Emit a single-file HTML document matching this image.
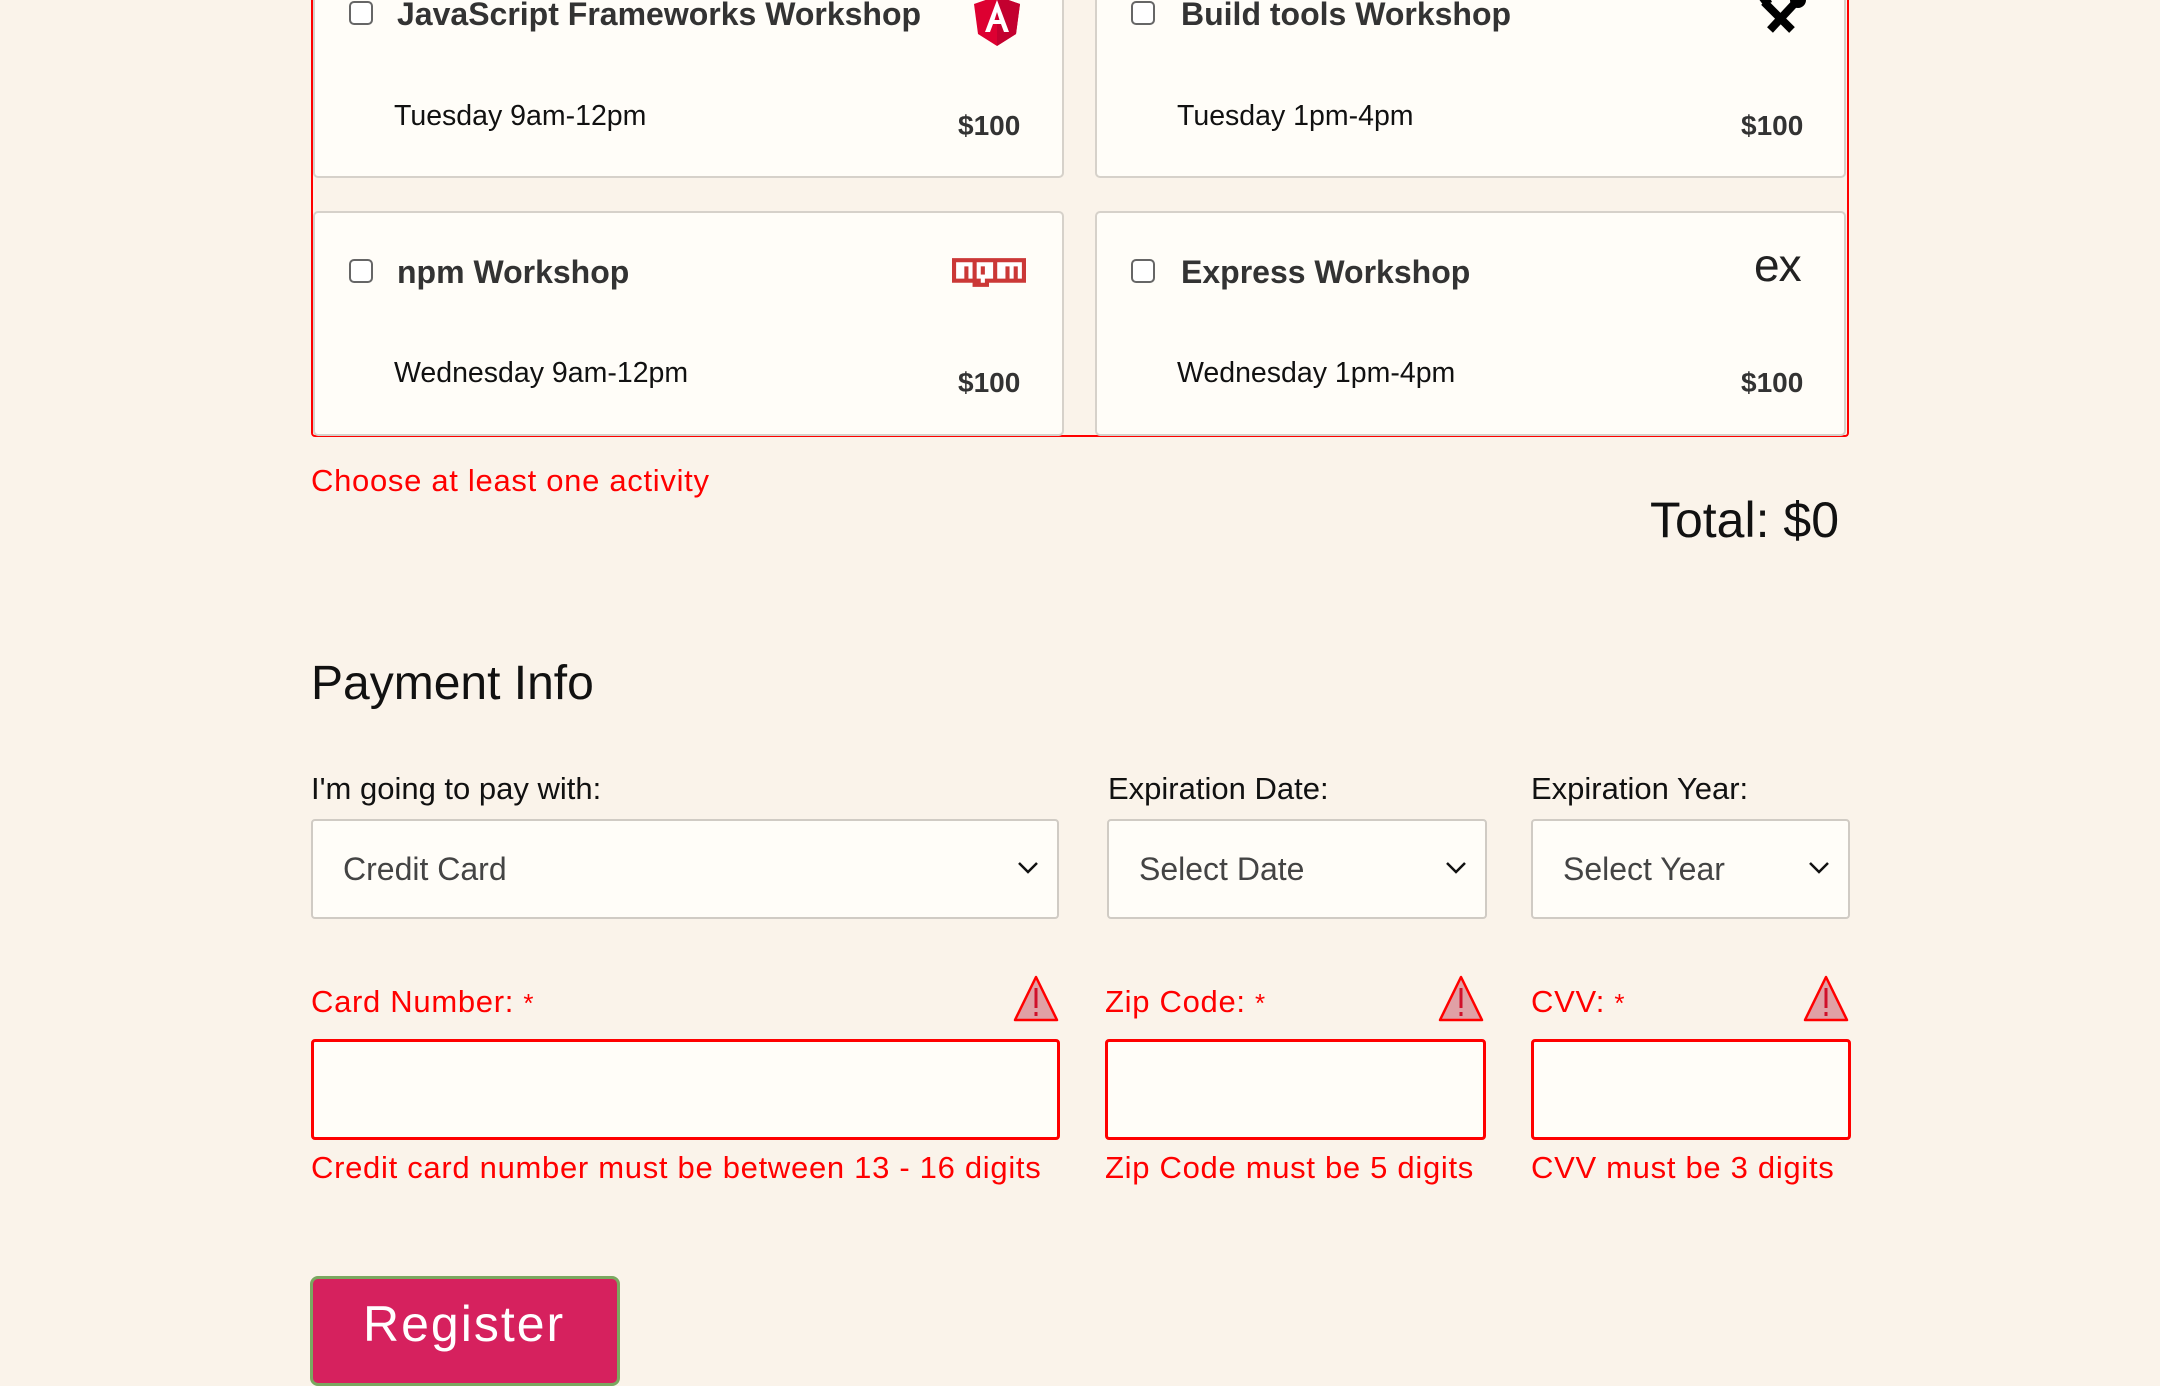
<!DOCTYPE html>
<html><head><meta charset="utf-8"><style>
*{box-sizing:border-box;margin:0;padding:0}
body{width:2160px;height:1372px;background:#faf3ea;position:relative;overflow:hidden;font-family:"Liberation Sans",sans-serif;}
.a{position:absolute;white-space:nowrap}
.fs{position:absolute;left:311px;top:-20px;width:1538px;height:457px;border:2px solid #f00;border-top:none;border-radius:0 0 4px 4px}
.card{position:absolute;background:#fffdf8;border:2px solid #d6d1ca;border-radius:5px}
.cb{position:absolute;width:24px;height:24px;border:2px solid #666;border-radius:5px;background:#fff}
.t{font-weight:bold;font-size:32px;color:#333}
.tm{font-size:28.5px;color:#111}
.pr{font-weight:bold;font-size:28px;color:#333}
.sel{position:absolute;top:819px;height:100px;background:#fffdf8;border:2px solid #d0cbc4;border-radius:4px;font-size:32px;color:#444;padding-left:30px;line-height:96px}
.sel svg{position:absolute;right:18px;top:40px}
.lab{font-size:31px;color:#111}
.err{font-size:31px;color:#f00;letter-spacing:0.7px}
.inp{position:absolute;top:1039px;height:101px;background:#fffdf8;border:3px solid #f00;border-radius:4px}
</style></head><body>
<div class="fs"></div>
<div class="card" style="left:313px;top:-20px;width:751px;height:198px"></div>
<div class="card" style="left:1095px;top:-20px;width:751px;height:198px"></div>
<div class="card" style="left:313px;top:211px;width:751px;height:225px"></div>
<div class="card" style="left:1095px;top:211px;width:751px;height:225px"></div>

<div class="cb" style="left:349px;top:1px"></div>
<div class="a t" style="left:397px;top:-4px">JavaScript Frameworks Workshop</div>
<div class="a tm" style="left:394px;top:100px">Tuesday 9am-12pm</div>
<div class="a pr" style="left:958px;top:110px">$100</div>
<svg class="a" style="left:972px;top:-4px" width="50" height="50" viewBox="0 0 50 50"><path d="M25 0 L48 8 L44 38 L25 50 L6 38 L2 8 Z" fill="#dd0031"/><path d="M25 0 L48 8 L44 38 L25 50Z" fill="#c3002f"/><path d="M25 4 L13 36 H18 L21 28 H29 L32 36 H37 Z M22.5 24 L25 16 L27.5 24Z" fill="#fff"/></svg>

<div class="cb" style="left:1131px;top:1px"></div>
<div class="a t" style="left:1181px;top:-4px">Build tools Workshop</div>
<div class="a tm" style="left:1177px;top:100px">Tuesday 1pm-4pm</div>
<div class="a pr" style="left:1741px;top:110px">$100</div>
<svg class="a" style="left:1756px;top:-6px" width="50" height="40" viewBox="0 0 50 40"><path d="M8 8 L36 36" stroke="#000" stroke-width="8"/><path d="M40 8 L14 36" stroke="#000" stroke-width="8"/><path d="M2 4 L12 0 L16 8 L8 12Z" fill="#000"/><circle cx="42" cy="6" r="8" fill="#000"/><circle cx="46" cy="2" r="4" fill="#fffdf8"/></svg>

<div class="cb" style="left:349px;top:259px"></div>
<div class="a t" style="left:397px;top:254px">npm Workshop</div>
<div class="a tm" style="left:394px;top:357px">Wednesday 9am-12pm</div>
<div class="a pr" style="left:958px;top:367px">$100</div>
<svg class="a" style="left:952px;top:258px" width="74" height="29" viewBox="0 0 18 7"><path d="M0 0h18v6H9v1H5V6H0z" fill="#cb3837"/><path d="M1 1h4v4H4V2H3v3H1z M6 1h4v4H8v1H7V5H6z M8 2h1v2H8z M11 1h6v4h-1V2h-1v3h-1V2h-1v3h-2z" fill="#fff"/><path d="M7 2h1v2H7z" fill="#cb3837"/></svg>

<div class="cb" style="left:1131px;top:259px"></div>
<div class="a t" style="left:1181px;top:254px">Express Workshop</div>
<div class="a tm" style="left:1177px;top:357px">Wednesday 1pm-4pm</div>
<div class="a pr" style="left:1741px;top:367px">$100</div>
<div class="a" style="left:1754px;top:238px;font-size:46px;color:#222;letter-spacing:-1px">ex</div>

<div class="a err" style="left:311px;top:463px">Choose at least one activity</div>
<div class="a" style="right:321px;top:491px;font-size:50px;color:#111">Total: $0</div>

<div class="a" style="left:311px;top:656px;font-size:48px;color:#111">Payment Info</div>
<div class="a lab" style="left:311px;top:771px">I'm going to pay with:</div>
<div class="a lab" style="left:1108px;top:771px">Expiration Date:</div>
<div class="a lab" style="left:1531px;top:771px">Expiration Year:</div>

<div class="sel" style="left:311px;width:748px">Credit Card<svg width="22" height="14" viewBox="0 0 22 14"><path d="M2 2 L11 11 L20 2" stroke="#111" stroke-width="2.5" fill="none"/></svg></div>
<div class="sel" style="left:1107px;width:380px">Select Date<svg width="22" height="14" viewBox="0 0 22 14"><path d="M2 2 L11 11 L20 2" stroke="#111" stroke-width="2.5" fill="none"/></svg></div>
<div class="sel" style="left:1531px;width:319px">Select Year<svg width="22" height="14" viewBox="0 0 22 14"><path d="M2 2 L11 11 L20 2" stroke="#111" stroke-width="2.5" fill="none"/></svg></div>

<div class="a err" style="left:311px;top:984px">Card Number: <span style="font-size:26px">*</span></div>
<div class="a err" style="left:1105px;top:984px">Zip Code: <span style="font-size:26px">*</span></div>
<div class="a err" style="left:1531px;top:984px">CVV: <span style="font-size:26px">*</span></div>
<svg class="a" style="left:1013px;top:975px" width="46" height="48" viewBox="0 0 46 48"><path d="M23 2 L44 45 H2 Z" fill="#e0a0a5" stroke="#f00" stroke-width="2.5" stroke-linejoin="round"/><path d="M23 13 V33 M23 37 V41" stroke="#d0102a" stroke-width="3"/></svg>
<svg class="a" style="left:1438px;top:975px" width="46" height="48" viewBox="0 0 46 48"><path d="M23 2 L44 45 H2 Z" fill="#e0a0a5" stroke="#f00" stroke-width="2.5" stroke-linejoin="round"/><path d="M23 13 V33 M23 37 V41" stroke="#d0102a" stroke-width="3"/></svg>
<svg class="a" style="left:1803px;top:975px" width="46" height="48" viewBox="0 0 46 48"><path d="M23 2 L44 45 H2 Z" fill="#e0a0a5" stroke="#f00" stroke-width="2.5" stroke-linejoin="round"/><path d="M23 13 V33 M23 37 V41" stroke="#d0102a" stroke-width="3"/></svg>

<div class="inp" style="left:311px;width:749px"></div>
<div class="inp" style="left:1105px;width:381px"></div>
<div class="inp" style="left:1531px;width:320px"></div>

<div class="a err" style="left:311px;top:1150px">Credit card number must be between 13 - 16 digits</div>
<div class="a err" style="left:1105px;top:1150px">Zip Code must be 5 digits</div>
<div class="a err" style="left:1531px;top:1150px">CVV must be 3 digits</div>

<div class="a" style="left:310px;top:1276px;width:310px;height:110px;background:#d6215e;border:3px solid #7aa860;border-radius:8px;color:#fff;font-size:50px;letter-spacing:2px;padding-left:50px;padding-top:16px">Register</div>
</body></html>
